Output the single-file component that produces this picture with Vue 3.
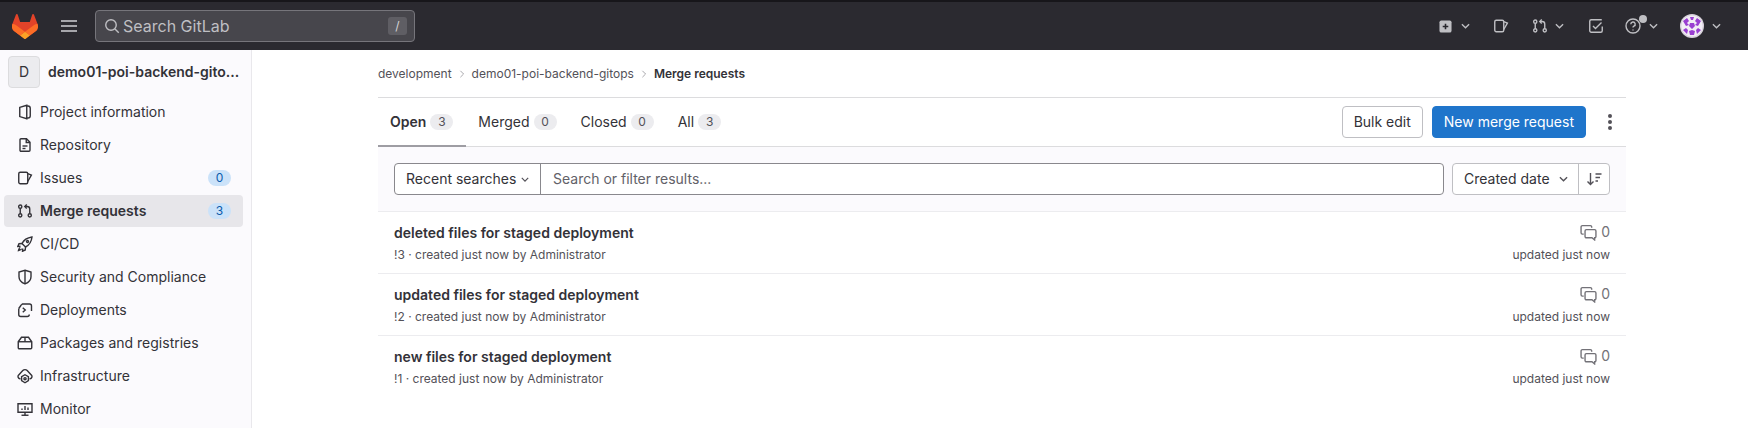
<script setup>
const nav = [
  { label: 'Project information', paths: ['M2.75 3.4 9.75 1.3v13.4l-7-2.1z', 'M9.75 2h1.25a2.25 2.25 0 0 1 2.25 2.25v7.5A2.25 2.25 0 0 1 11 14H9.75'] },
  { label: 'Repository', paths: ['M3 2.75a1 1 0 0 1 1-1h5.5L13 5.25v8a1 1 0 0 1-1 1H4a1 1 0 0 1-1-1z', 'M9.25 2v3.5H13', 'M5.5 9h5', 'M5.5 11.5h3'] },
  { label: 'Issues', badge: '0', paths: ['M1.75 3.75a1.5 1.5 0 0 1 1.5-1.5h6a1.5 1.5 0 0 1 1.5 1.5v8.5a1.5 1.5 0 0 1-1.5 1.5h-6a1.5 1.5 0 0 1-1.5-1.5z', 'M10.75 3.6 14.4 5l-3.65 6.5'] },
  { label: 'Merge requests', badge: '3', active: true, paths: ['M3.25 5.25a1.6 1.6 0 1 0 0-3.2 1.6 1.6 0 0 0 0 3.2z', 'M3.25 13.95a1.6 1.6 0 1 0 0-3.2 1.6 1.6 0 0 0 0 3.2z', 'M12.75 13.95a1.6 1.6 0 1 0 0-3.2 1.6 1.6 0 0 0 0 3.2z', 'M3.25 5.25v5.5', 'M12.75 10.75V6a2.5 2.5 0 0 0-2.5-2.5H8', 'M9.75 1.5 7.75 3.5l2 2'] },
  { label: 'CI/CD', paths: ['M5 7.5C7 3.5 10.5 1.75 15 1 14.5 5.5 12.5 9 8.5 11z', 'M5 7.5 2 7.75.75 10.5 3.5 10.25', 'M8.5 11l-.25 3L5.5 15.25l.25-2.75', 'M3.25 11.25C2 12 1.5 14.5 1.5 14.5s2.5-.5 3.25-1.75', 'M10.5 4.5a1 1 0 1 0 .01 0z'] },
  { label: 'Security and Compliance', paths: ['M8 1.25 14 3v4.75c0 3.4-2.6 5.9-6 7.2-3.4-1.3-6-3.8-6-7.2V3z', 'M8 1.5v13'] },
  { label: 'Deployments', paths: ['M4.25 3 5.5 2h7a2 2 0 0 1 2 2v5', 'M1.75 6.5v6a2 2 0 0 0 2 2h6.5a2 2 0 0 0 2-2', 'M4.25 3 1.75 6.5', 'M5.75 5.75 8.25 8l-2.5 2.25'] },
  { label: 'Packages and registries', paths: ['M1.25 6.75 4.5 2.25h7l3.25 4.5v6a1 1 0 0 1-1 1H2.25a1 1 0 0 1-1-1z', 'M1.25 6.75h13.5', 'M8 2.25v4.5'] },
  { label: 'Infrastructure', paths: ['M3.5 10.75H3a2.25 2.25 0 0 1-1.5-3.6L5.8 2.6a3 3 0 0 1 4.4 0l4.3 4.55A2.25 2.25 0 0 1 13 10.75h-.5', 'M8 6.75l3.4 2v3.9L8 14.75l-3.4-2.1v-3.9z', 'M8 9.6a1.1 1.1 0 1 0 0 2.2 1.1 1.1 0 0 0 0-2.2z'] },
  { label: 'Monitor', paths: ['M1 2.75h14v8.5H1z', 'M8 11.25v3', 'M4.5 14.25h7', 'M5 9V7.5', 'M8 9V5', 'M11 9V6.5'] },
]
const tabs = [
  { label: 'Open', count: 3, active: true },
  { label: 'Merged', count: 0 },
  { label: 'Closed', count: 0 },
  { label: 'All', count: 3 },
]
const rows = [
  { title: 'deleted files for staged deployment', id: '!3' },
  { title: 'updated files for staged deployment', id: '!2' },
  { title: 'new files for staged deployment', id: '!1' },
]
const mrPaths = nav[3].paths
const issuePaths = nav[2].paths
</script>

<template>
  <div class="page">
    <header class="topbar">
      <svg class="logo" viewBox="0 0 25 24" width="26" height="25">
        <path fill="#E24329" d="m24.507 9.5-.034-.09L21.082.562a.896.896 0 0 0-1.694.091l-2.29 7.01H7.825L5.535.653a.898.898 0 0 0-1.694-.09L.451 9.411.416 9.5a6.297 6.297 0 0 0 2.09 7.278l.012.01.03.022 5.16 3.867 2.56 1.935 1.554 1.176a1.051 1.051 0 0 0 1.268 0l1.555-1.176 2.56-1.935 5.197-3.89.014-.01A6.297 6.297 0 0 0 24.507 9.5Z"/>
        <path fill="#FC6D26" d="m24.507 9.5-.034-.09a11.44 11.44 0 0 0-4.56 2.051l-7.447 5.632 4.742 3.584 5.197-3.89.014-.01A6.297 6.297 0 0 0 24.507 9.5Z"/>
        <path fill="#FCA326" d="m7.707 20.677 2.56 1.935 1.555 1.176a1.051 1.051 0 0 0 1.268 0l1.555-1.176 2.56-1.935-4.743-3.584-4.755 3.584Z"/>
        <path fill="#FC6D26" d="M5.01 11.461a11.43 11.43 0 0 0-4.56-2.05L.416 9.5a6.297 6.297 0 0 0 2.09 7.278l.012.01.03.022 5.16 3.867 4.745-3.584-7.444-5.632Z"/>
      </svg>
      <svg class="burger" viewBox="0 0 16 16" width="16" height="16"><path d="M0 3h16M0 8h16M0 13h16" stroke="#cfcfd3" stroke-width="1.5"/></svg>
      <div class="search">
        <svg viewBox="0 0 16 16" width="16" height="16" class="stroke"><circle cx="7" cy="7" r="5.25"/><path d="m11 11 3.75 3.75"/></svg>
        <span class="search-text">Search GitLab</span>
        <kbd class="slash">/</kbd>
      </div>
      <div class="spacer"></div>
      <div class="top-icons">
        <span class="ti w-plus">
          <svg viewBox="0 0 14 14" width="13" height="13"><rect x="0.5" y="0.5" width="13" height="13" rx="2" fill="#bfbfc3"/><path d="M7 4v6M4 7h6" stroke="#28272d" stroke-width="1.7"/></svg>
          <svg class="chev" viewBox="0 0 10 6" width="9" height="6"><path d="M1 1l4 4 4-4"/></svg>
        </span>
        <span class="ti w-issue">
          <svg viewBox="0 0 16 16" width="16" height="16" class="stroke"><path v-for="d in issuePaths" :key="d" :d="d"/></svg>
        </span>
        <span class="ti w-mr">
          <svg viewBox="0 0 16 16" width="16" height="16" class="stroke"><path v-for="d in mrPaths" :key="d" :d="d"/></svg>
          <svg class="chev" viewBox="0 0 10 6" width="9" height="6"><path d="M1 1l4 4 4-4"/></svg>
        </span>
        <span class="ti w-todo">
          <svg viewBox="0 0 16 16" width="16" height="16" class="stroke"><path d="M14.25 8.5v4.25a1.5 1.5 0 0 1-1.5 1.5H3.25a1.5 1.5 0 0 1-1.5-1.5v-9.5a1.5 1.5 0 0 1 1.5-1.5h10.5"/><path d="m5 8 2.5 2.5 6-6"/></svg>
        </span>
        <span class="ti w-help">
          <svg viewBox="0 0 16 16" width="16" height="16" class="stroke"><circle cx="8" cy="8" r="7"/><path d="M5.8 6.2A2.2 2.2 0 1 1 8.9 8.2c-.6.3-.9.7-.9 1.4"/><path d="M8 11.4v1"/></svg>
          <i class="dot"></i>
          <svg class="chev" viewBox="0 0 10 6" width="9" height="6"><path d="M1 1l4 4 4-4"/></svg>
        </span>
        <span class="ti w-user">
          <svg viewBox="0 0 24 24" width="24" height="24">
            <circle cx="12" cy="12" r="12" fill="#d8d2dc"/>
            <circle cx="12" cy="12" r="10.6" fill="#f2edf5"/>
            <g fill="#9a3fd1">
              <path d="M3 7l4-3 2 3-2 2 2 2-3 1zM21 7l-4-3-2 3 2 2-2 2 3 1z"/>
              <path d="M3 16l3-2 2 2-1 4zM21 16l-3-2-2 2 1 4z"/>
              <path d="M10 3h4l-1 3h-2zM10 9h4l1 3-3 3-3-3zM9 17l3-1 3 1-1 4h-4z"/>
            </g>
          </svg>
          <svg class="chev" viewBox="0 0 10 6" width="9" height="6"><path d="M1 1l4 4 4-4"/></svg>
        </span>
      </div>
    </header>

    <div class="body">
      <aside class="sidebar">
        <div class="context">
          <span class="avatar">D</span>
          <span class="context-title">demo01-poi-backend-gito...</span>
        </div>
        <ul class="nav">
          <li v-for="item in nav" :key="item.label" class="nav-item" :class="{ active: item.active }">
            <svg class="nav-icon" viewBox="0 0 16 16" width="16" height="16"><path v-for="d in item.paths" :key="d" :d="d"/></svg>
            <span class="nav-label">{{ item.label }}</span>
            <span v-if="item.badge" class="nav-badge">{{ item.badge }}</span>
          </li>
        </ul>
      </aside>

      <main class="content">
        <nav class="crumbs">
          <span>development</span>
          <svg class="sep" viewBox="0 0 6 10" width="6" height="8"><path d="M1 1l4 4-4 4"/></svg>
          <span>demo01-poi-backend-gitops</span>
          <svg class="sep" viewBox="0 0 6 10" width="6" height="8"><path d="M1 1l4 4-4 4"/></svg>
          <strong>Merge requests</strong>
        </nav>

        <section class="tabbar">
          <div class="tabs">
            <div v-for="t in tabs" :key="t.label" class="tab" :class="{ on: t.active }">
              <span>{{ t.label }}</span><span class="pill">{{ t.count }}</span>
            </div>
          </div>
          <div class="actions">
            <button class="btn">Bulk edit</button>
            <button class="btn primary">New merge request</button>
            <span class="kebab"><i></i><i></i><i></i></span>
          </div>
        </section>

        <section class="filters">
          <div class="filter-box">
            <div class="recent">Recent searches
              <svg class="chev dark" viewBox="0 0 10 6" width="8" height="5"><path d="M1 1l4 4 4-4"/></svg>
            </div>
            <div class="filter-input">Search or filter results...</div>
          </div>
          <div class="sort">
            <div class="sort-date">Created date
              <svg class="chev dark" viewBox="0 0 10 6" width="9" height="6"><path d="M1 1l4 4 4-4"/></svg>
            </div>
            <div class="sort-dir">
              <svg viewBox="0 0 16 16" width="16" height="16" class="dir"><path d="M4.5 2v11M1.5 10.5l3 3 3-3M9.5 3h6M9.5 6.5h4.5M9.5 10h2.5"/></svg>
            </div>
          </div>
        </section>

        <ul class="rows">
          <li v-for="r in rows" :key="r.id" class="row">
            <div class="row-main">
              <div class="row-title">{{ r.title }}</div>
              <div class="row-meta">{{ r.id }} · created just now by Administrator</div>
            </div>
            <div class="row-side">
              <div class="comments">
                <svg viewBox="0 0 16 16" width="17" height="17" class="cmt"><path d="M11 3.5V2.75a1.25 1.25 0 0 0-1.25-1.25h-7.5A1.25 1.25 0 0 0 1 2.75v5.5A1.25 1.25 0 0 0 2.25 9.5H3.5"/><path d="M6 5.25h7.75A1.25 1.25 0 0 1 15 6.5v5.25A1.25 1.25 0 0 1 13.75 13v2l-2.5-2H6a1.25 1.25 0 0 1-1.25-1.25V6.5A1.25 1.25 0 0 1 6 5.25z"/></svg>
                <span>0</span>
              </div>
              <div class="row-meta">updated just now</div>
            </div>
          </li>
        </ul>
      </main>
    </div>
  </div>
</template>

<style>
html, body { margin: 0; background: #fff; overflow: hidden; }
</style>

<style scoped>
* { box-sizing: border-box; }
.page { width: 1748px; height: 428px; overflow: hidden; font: 14px/20px Inter, "Noto Sans", sans-serif; color: #333238; display: flex; flex-direction: column; }
ul { list-style: none; margin: 0; padding: 0; }

.topbar { height: 50px; flex: none; background: #2b2a30; border-top: 2px solid #17161a; display: flex; align-items: center; padding-left: 12px; }
.logo { flex: none; }
.burger { flex: none; margin-left: 23px; }
.search { margin-left: 18px; width: 320px; height: 32px; border: 1px solid #76757b; border-radius: 4px; background: #47464c; display: flex; align-items: center; padding: 0 7px 0 8px; color: #bfbfc3; }
.stroke { fill: none; stroke: #bfbfc3; stroke-width: 1.4; flex: none; }
.search-text { margin-left: 3px; flex: 1; font-size: 16px; }
.slash { width: 19px; height: 18px; border-radius: 3px; background: #5f5e64; color: #d5d5d8; font: 12px/18px Inter, sans-serif; text-align: center; }
.spacer { flex: 1; }
.top-icons { display: flex; align-items: center; padding-right: 27px; }
.ti { display: flex; align-items: center; position: relative; }
.chev { fill: none; stroke: #bfbfc3; stroke-width: 1.5; flex: none; }
.chev.dark { stroke: #535158; }
.w-plus { gap: 9px; margin-right: 23px; }
.w-issue { margin-right: 23px; }
.w-mr { gap: 7px; margin-right: 24px; }
.w-todo { margin-right: 21px; }
.w-help { gap: 8px; margin-right: 22px; }
.w-user { gap: 8px; }
.dot { position: absolute; left: 14px; top: -3px; width: 8px; height: 8px; border-radius: 50%; background: #bfbfc3; }

.body { flex: 1; display: flex; min-height: 0; }
.sidebar { width: 252px; flex: none; background: #fbfafd; border-right: 1px solid #e9e8ec; padding: 6px 8px 0 4px; }
.context { display: flex; align-items: center; height: 32px; padding-left: 4px; gap: 8px; margin-bottom: 8px; }
.avatar { width: 32px; height: 32px; flex: none; background: #ececef; border: 1px solid #dcdcde; border-radius: 4px; display: flex; align-items: center; justify-content: center; font-size: 14px; }
.context-title { font-weight: 600; white-space: nowrap; overflow: hidden; }
.nav { display: flex; flex-direction: column; gap: 1px; }
.nav-item { height: 32px; display: flex; align-items: center; padding: 0 12px 0 12px; border-radius: 4px; }
.nav-item.active { background: #e7e6ea; font-weight: 600; }
.nav-icon { fill: none; stroke: #333238; stroke-width: 1.4; margin-left: 1px; flex: none; }
.nav-label { margin-left: 7px; flex: 1; }
.nav-badge { min-width: 23px; height: 16px; padding: 0 7px; border-radius: 8px; background: #cbe2f9; color: #0b5cad; font: 400 12px/16px Inter, sans-serif; text-align: center; }

.content { flex: 1; padding: 0 122px 0 126px; min-width: 0; }
.crumbs { height: 47px; display: flex; align-items: center; font-size: 12px; color: #535158; }
.crumbs strong { color: #333238; font-weight: 600; }
.sep { fill: none; stroke: #a4a3a8; stroke-width: 1.2; margin: 0 7px; }
.tabbar { height: 50px; border-top: 1px solid #dcdcde; border-bottom: 1px solid #dcdcde; display: flex; justify-content: space-between; align-items: center; }
.tabs { display: flex; height: 49px; }
.tab { display: flex; align-items: center; padding: 0 12px; height: 49px; margin-bottom: -1px; }
.tab.on { font-weight: 600; box-shadow: inset 0 -2px 0 #9e9da3; padding-right: 13px; }
.pill { margin-left: 4px; min-width: 23px; height: 16px; border-radius: 8px; background: #ececef; color: #535158; font: 400 12px/16px Inter, sans-serif; text-align: center; }
.actions { display: flex; align-items: center; }
.btn { height: 32px; padding: 0 11px; border: 1px solid #bfbfc3; border-radius: 4px; background: #fff; color: #333238; font: 14px/18px Inter, sans-serif; margin-right: 9px; }
.btn.primary { background: #1f75cb; border-color: #1f75cb; color: #fff; margin-right: 8px; }
.kebab { width: 32px; display: flex; flex-direction: column; align-items: center; gap: 2px; }
.kebab i { width: 4px; height: 4px; border-radius: 50%; background: #535158; }

.filters { height: 65px; background: #fbfafd; padding: 16px; display: flex; gap: 8px; align-items: flex-start; border-bottom: 1px solid #ececef; }
.filter-box { flex: 1; height: 32px; display: flex; border: 1px solid #89888d; border-radius: 4px; background: #fff; }
.recent { width: 146px; flex: none; border-right: 1px solid #89888d; display: flex; align-items: center; gap: 5px; padding-left: 11px; color: #333238; }
.filter-input { padding-left: 12px; line-height: 30px; color: #626168; }
.sort { display: flex; height: 32px; border: 1px solid #bfbfc3; border-radius: 4px; background: #fff; }
.sort-date { width: 126px; display: flex; align-items: center; gap: 9px; padding-left: 11px; border-right: 1px solid #bfbfc3; }
.sort-dir { width: 30px; display: flex; align-items: center; justify-content: center; }
.dir { fill: none; stroke: #535158; stroke-width: 1.4; }

.row { height: 62px; padding: 11px 16px 0; display: flex; justify-content: space-between; border-bottom: 1px solid #ececef; }
.row:last-child { border-bottom: 0; }
.row-title { font-weight: 600; line-height: 20px; }
.row-meta { font-size: 12px; line-height: 16px; margin-top: 4px; color: #535158; }
.row-side { text-align: right; }
.row-side .row-meta { margin-top: 5px; }
.comments { display: flex; justify-content: flex-end; align-items: center; gap: 4px; height: 20px; margin-top: -1px; color: #737278; }
.cmt { fill: none; stroke: #737278; stroke-width: 1.3; }
</style>
